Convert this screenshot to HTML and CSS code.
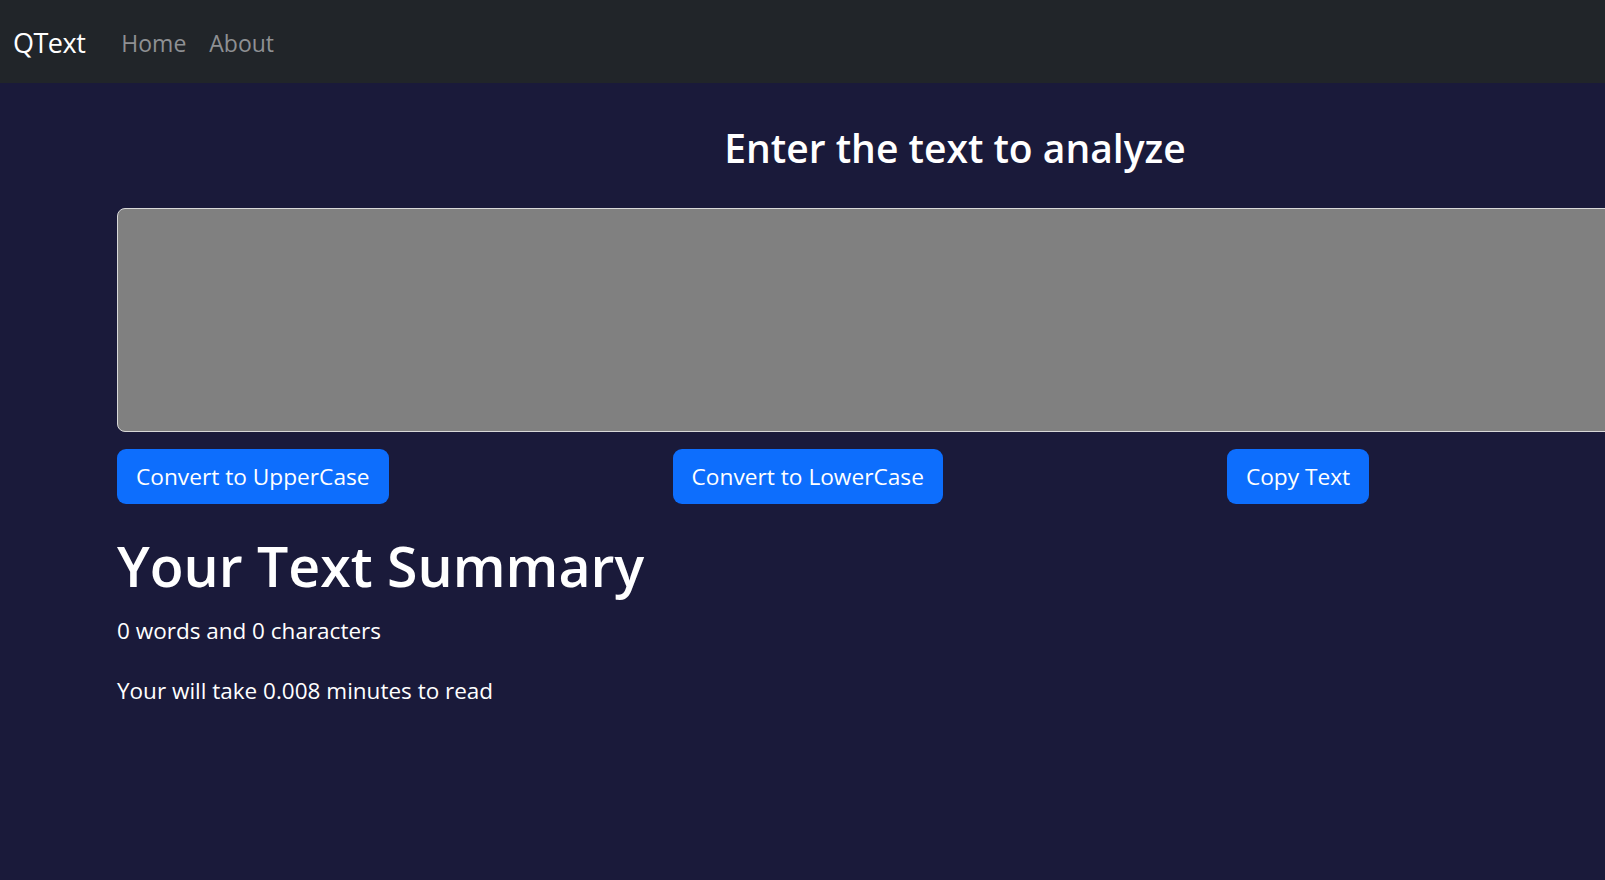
FILE: index.html
```html
<!DOCTYPE html>
<html lang="en">
<head>
<meta charset="utf-8">
<title>QText</title>
<link rel="stylesheet" href="styles.css">
</head>
<body>
<nav class="navbar">
  <a class="brand" href="#">QText</a>
  <ul class="nav-links">
    <li><a href="#">Home</a></li>
    <li><a href="#">About</a></li>
  </ul>
</nav>
<main class="container">
  <h2 class="title">Enter the text to analyze</h2>
  <textarea class="text-box"></textarea>
  <div class="actions">
    <button class="btn">Convert to UpperCase</button>
    <button class="btn">Convert to LowerCase</button>
    <button class="btn">Copy Text</button>
  </div>
  <h1 class="summary-title">Your Text Summary</h1>
  <p class="stat">0 words and 0 characters</p>
  <p class="stat">Your will take 0.008 minutes to read</p>
</main>
</body>
</html>
```
FILE: styles.css
```css
html, body {
  margin: 0;
  padding: 0;
}
body {
  background: #1a1a3a;
  color: #fff;
  font-family: "Open Sans", "Noto Sans", sans-serif;
  overflow: hidden;
  height: 880px;
}
.navbar {
  background: #212529;
  height: 83px;
  display: flex;
  align-items: center;
  padding: 2px 13px 0;
  box-sizing: border-box;
}
.brand {
  color: #fff;
  text-decoration: none;
  font-size: 27px;
  letter-spacing: -0.5px;
  margin-right: 36px;
}
.nav-links {
  list-style: none;
  margin: 0;
  padding: 0;
  display: flex;
  gap: 23px;
}
.nav-links a {
  color: #8e9093;
  text-decoration: none;
  font-size: 23px;
}
.container {
  width: 1676px;
  margin-left: 117px;
  padding-top: 40px;
}
.title {
  margin: 0 0 35px;
  text-align: center;
  font-size: 39px;
  line-height: 50px;
  font-weight: 600;
}
.text-box {
  display: block;
  width: 100%;
  height: 224px;
  box-sizing: border-box;
  background: #808080;
  border: 1px solid #d8d8d8;
  border-radius: 8px;
  resize: none;
  margin: 0;
}
.actions {
  display: flex;
  gap: 284px;
  margin-top: 17px;
}
.btn {
  background: #0d6efd;
  color: #fff;
  border: none;
  border-radius: 9px;
  height: 55px;
  padding: 0 19px;
  font-family: inherit;
  font-size: 22.7px;
}
.summary-title {
  margin: 28px 0 13px;
  font-size: 55.4px;
  font-weight: 600;
  line-height: 68px;
}
.stat {
  margin: 0 0 24px;
  font-size: 22.5px;
  line-height: 36px;
}
```
